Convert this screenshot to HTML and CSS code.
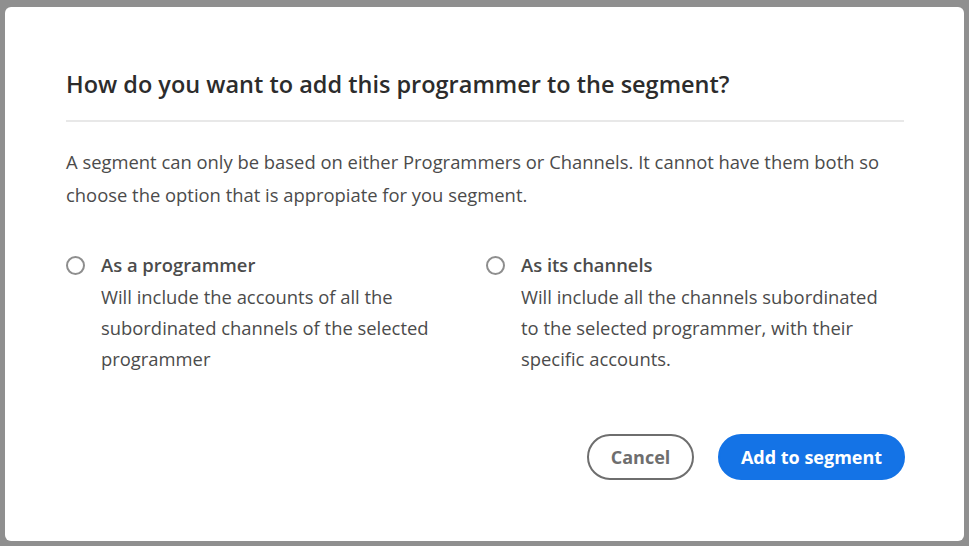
FILE: index.html
```html
<!DOCTYPE html>
<html lang="en">
<head>
<meta charset="utf-8">
<title>Add programmer to segment</title>
<link rel="stylesheet" href="styles.css">
</head>
<body>
<div class="backdrop">
  <section class="dialog" role="dialog" aria-labelledby="dlg-title">
    <h2 class="dialog-title" id="dlg-title">How do you want to add this programmer to the segment?</h2>
    <hr class="divider">
    <p class="intro">A segment can only be based on either Programmers or Channels. It cannot have them both so choose the option that is appropiate for you segment.</p>
    <div class="options">
      <label class="option">
        <span class="radio"></span>
        <span class="option-text">
          <span class="option-label">As a programmer</span>
          <span class="option-desc">Will include the accounts of all the subordinated channels of the selected programmer</span>
        </span>
      </label>
      <label class="option">
        <span class="radio"></span>
        <span class="option-text">
          <span class="option-label">As its channels</span>
          <span class="option-desc">Will include all the channels subordinated to the selected programmer, with their specific accounts.</span>
        </span>
      </label>
    </div>
    <div class="actions">
      <button class="btn btn-secondary" type="button">Cancel</button>
      <button class="btn btn-primary" type="button">Add to segment</button>
    </div>
  </section>
</div>
</body>
</html>
```

FILE: styles.css
```css
html, body {
  margin: 0;
  padding: 0;
}

body {
  background: #8f8f8f;
  font-family: "Open Sans", "Noto Sans", sans-serif;
  width: 969px;
  height: 546px;
  overflow: hidden;
}

.backdrop {
  padding: 7px 5px 5px 5px;
}

.dialog {
  box-sizing: border-box;
  width: 959px;
  height: 534px;
  background: #ffffff;
  border-radius: 6px;
  padding: 61px 59px 0 61px;
  display: flex;
  flex-direction: column;
}

.dialog-title {
  margin: 0;
  font-size: 23.5px;
  line-height: 32px;
  font-weight: 600;
  color: #2c2c2c;
}

.divider {
  margin: 20px 1px 0 0;
  border: 0;
  height: 2px;
  background: #e8e8e8;
}

.intro {
  margin: 23px 0 0 0;
  font-size: 18.4px;
  line-height: 33px;
  color: #4b4b4b;
}

.options {
  margin-top: 38px;
  display: grid;
  grid-template-columns: 420px 1fr;
}

.option {
  display: flex;
  align-items: flex-start;
  gap: 16px;
}

.radio {
  box-sizing: border-box;
  flex: none;
  width: 19px;
  height: 19px;
  margin-top: 7px;
  border: 2px solid #8e8e8e;
  border-radius: 50%;
  background: #fff;
}

.option-text {
  display: flex;
  flex-direction: column;
  max-width: 365px;
}

.option-label {
  font-size: 18.4px;
  line-height: 32px;
  font-weight: 600;
  color: #4b4b4b;
}

.option-desc {
  font-size: 18.4px;
  line-height: 31px;
  color: #4b4b4b;
}

.actions {
  margin-top: 60px;
  display: flex;
  justify-content: flex-end;
  gap: 24px;
}

.btn {
  box-sizing: border-box;
  height: 46px;
  border-radius: 23px;
  font-family: inherit;
  font-size: 18px;
  font-weight: 700;
  padding: 0;
  cursor: pointer;
}

.btn-secondary {
  width: 107px;
  background: #fff;
  border: 2px solid #6e6e6e;
  color: #6e6e6e;
}

.btn-primary {
  width: 187px;
  background: #1473e6;
  border: 2px solid #1473e6;
  color: #fff;
}
```
